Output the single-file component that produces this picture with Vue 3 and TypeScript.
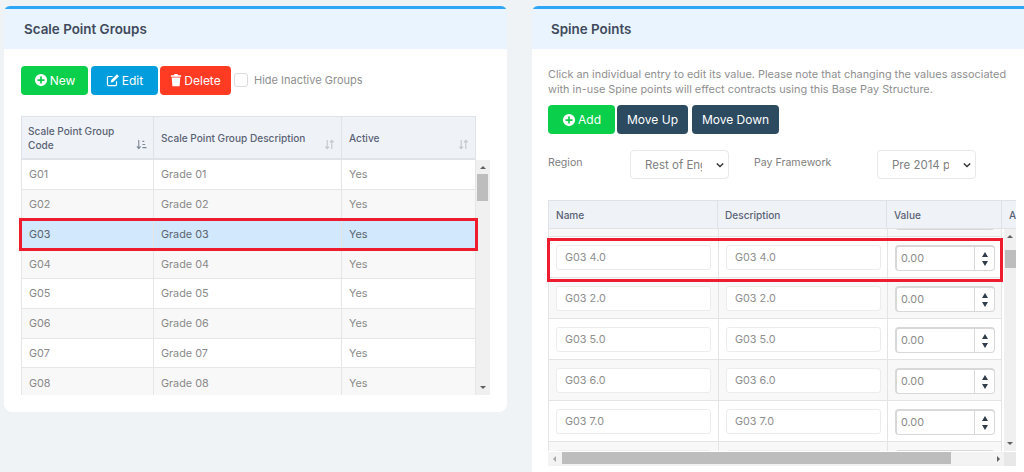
<script setup lang="ts">
const groups = ['01','02','03','04','05','06','07','08'].map(n => ({ code: 'G' + n, desc: 'Grade ' + n, active: 'Yes', picked: n === '03' }))
const spine = ['3.0','4.0','2.0','5.0','6.0','7.0','8.0']
</script>

<template>
  <div class="page">
    <section class="panel left">
      <h2 class="panel-head">Scale Point Groups</h2>
      <div class="left-body">
        <div class="toolbar">
          <button class="btn green w67">
            <svg class="ic" viewBox="0 0 16 16"><path fill="#fff" fill-rule="evenodd" d="M8 1a7 7 0 1 0 0 14A7 7 0 0 0 8 1zM7 4h2v3h3v2H9v3H7V9H4V7h3z"/></svg>New
          </button>
          <button class="btn blue w67">
            <svg class="ic" viewBox="0 0 16 16"><path fill="none" stroke="#fff" stroke-width="1.4" d="M12 9.5V13a1.3 1.3 0 0 1-1.3 1.3H3A1.3 1.3 0 0 1 1.7 13V5.3A1.3 1.3 0 0 1 3 4h4.5"/><path fill="#fff" d="M12.6 1.4l2.2 2.2-6.6 6.6-2.8.6.6-2.8z"/></svg>Edit
          </button>
          <button class="btn red w71">
            <svg class="ic trash" viewBox="0 0 14 16"><path fill="#fff" d="M1 2.4h12V4.2H1zM5 1h4v2H5zM2 5h10L11.2 15.4H2.8z"/></svg>Delete
          </button>
          <label class="check"><input type="checkbox" class="box" /><span>Hide Inactive Groups</span></label>
        </div>
        <div class="grid-wrap">
          <div class="g-head">
            <div class="th c1"><span>Scale Point Group<br />Code</span>
              <svg class="sort dark" viewBox="0 0 12 12"><path d="M3 1v9M1 8l2 2.4L5 8" fill="none" stroke="currentColor" stroke-width="1.2"/><path d="M7 2h2v1.2H7zM7 5.4h3v1.2H7zM7 8.8h4.5V10H7z" fill="currentColor"/></svg>
            </div>
            <div class="th c2"><span>Scale Point Group Description</span>
              <svg class="sort" viewBox="0 0 12 12"><path d="M3.5 1v9.5M1.5 8.4l2 2.2 2-2.2M8.5 11V1.5M6.5 3.6l2-2.2 2 2.2" fill="none" stroke="currentColor" stroke-width="1.2"/></svg>
            </div>
            <div class="th c3"><span>Active</span>
              <svg class="sort" viewBox="0 0 12 12"><path d="M3.5 1v9.5M1.5 8.4l2 2.2 2-2.2M8.5 11V1.5M6.5 3.6l2-2.2 2 2.2" fill="none" stroke="currentColor" stroke-width="1.2"/></svg>
            </div>
          </div>
          <div class="g-scroll">
            <div class="g-rows">
              <div v-for="(g, i) in groups" :key="g.code" class="g-row" :class="{ odd: i % 2 === 1, picked: g.picked }">
                <div class="td c1">{{ g.code }}</div>
                <div class="td c2">{{ g.desc }}</div>
                <div class="td c3">{{ g.active }}</div>
              </div>
            </div>
            <div class="vbar">
              <i class="tri up"></i><b class="thumb"></b><i class="tri down"></i>
            </div>
          </div>
          <div class="mark mark-left"></div>
        </div>
      </div>
    </section>

    <section class="panel right">
      <h2 class="panel-head">Spine Points</h2>
      <div class="right-body">
        <p class="note">Click an individual entry to edit its value. Please note that changing the values associated with in-use Spine points will effect contracts using this Base Pay Structure.</p>
        <div class="toolbar2">
          <button class="btn green w67">
            <svg class="ic" viewBox="0 0 16 16"><path fill="#fff" fill-rule="evenodd" d="M8 1a7 7 0 1 0 0 14A7 7 0 0 0 8 1zM7 4h2v3h3v2H9v3H7V9H4V7h3z"/></svg>Add
          </button>
          <button class="btn dark-btn w71">Move Up</button>
          <button class="btn dark-btn w87">Move Down</button>
        </div>
        <div class="filters">
          <span class="f-label l1">Region</span>
          <div class="sel-wrap">
            <select class="dropdown"><option>Rest of England</option></select>
            <svg class="chev" viewBox="0 0 10 6"><path d="M1 1l4 4 4-4" fill="none" stroke="#333" stroke-width="1.7"/></svg>
          </div>
          <span class="f-label l2">Pay Framework</span>
          <div class="sel-wrap">
            <select class="dropdown"><option>Pre 2014 pay</option></select>
            <svg class="chev" viewBox="0 0 10 6"><path d="M1 1l4 4 4-4" fill="none" stroke="#333" stroke-width="1.7"/></svg>
          </div>
        </div>
        <div class="sp-wrap">
          <div class="sp-head">
            <div class="sh s1">Name</div>
            <div class="sh s2">Description</div>
            <div class="sh s3">Value</div>
            <div class="sh s4">Action</div>
          </div>
          <div class="sp-main">
            <div class="sp-view">
              <div class="sp-rows">
                <div v-for="(p, i) in spine" :key="p" class="sp-row" :class="{ odd: i % 2 === 0 }">
                  <div class="sd d1"><input class="txt" :value="'G03 ' + p" /></div>
                  <div class="sd d2"><input class="txt" :value="'G03 ' + p" /></div>
                  <div class="sd d3">
                    <div class="num">
                      <input class="num-in" value="0.00" />
                      <span class="step"><i class="arrow a-up"></i><i class="arrow a-down"></i></span>
                    </div>
                  </div>
                </div>
              </div>
            </div>
            <div class="vbar2">
              <i class="tri up"></i><b class="thumb2"></b><i class="tri down"></i>
            </div>
          </div>
          <div class="hbar">
            <div class="h-track">
              <i class="tri-h h-left"></i><b class="h-thumb"></b><i class="tri-h h-right"></i>
            </div>
            <div class="corner"></div>
          </div>
          <div class="mark mark-right"></div>
        </div>
      </div>
    </section>
  </div>
</template>

<style>
html, body { margin: 0; background: #eff3f6; }
</style>

<style scoped>
* { box-sizing: border-box; }
.page {
  display: flex;
  gap: 25px;
  width: 1024px;
  height: 472px;
  padding: 6px 0 0 4px;
  overflow: hidden;
  background: #eff3f6;
  font-family: Inter, "Liberation Sans", sans-serif;
  color: #8a8a8a;
}
.panel {
  background: #fff;
  border-top: 3px solid #2ea6f5;
  border-radius: 6px 6px 0 0;
  display: flex;
  flex-direction: column;
}
.left { width: 503px; height: 406px; border-radius: 6px 6px 8px 8px; }
.right { width: 492px; height: 466px; border-top-right-radius: 0; }
.panel-head {
  margin: 0;
  height: 40px;
  background: #eaf4fe;
  color: #3f4a5c;
  font-size: 13.4px;
  font-weight: 600;
  line-height: 40px;
}
.left .panel-head { padding-left: 20px; }
.right .panel-head { padding-left: 19px; }
.left-body { padding: 17px 0 0 17px; }
.toolbar { display: flex; align-items: center; height: 28px; }
.btn {
  height: 29px;
  border: 0;
  border-radius: 4px;
  color: #fff;
  font: 400 12px Inter, "Liberation Sans", sans-serif;
  display: inline-flex;
  align-items: center;
  justify-content: center;
  gap: 2px;
  padding: 0;
}
.w67 { width: 67px; }
.w71 { width: 71px; }
.w87 { width: 87px; }
.green { background: #0acf4a; }
.blue { background: #019ddc; margin-left: 3px; }
.red { background: #ff3b24; margin-left: 2px; }
.dark-btn { background: #2c4a60; }
.ic { width: 14px; height: 14px; }
.trash { width: 12px; }
.check { display: flex; align-items: center; margin-left: 3px; font-size: 11px; color: #8f8f8f; }
.box {
  appearance: none;
  width: 14px;
  height: 14px;
  margin: 0 6px 0 0;
  background: #fff;
  border: 1px solid #dcdcdc;
  border-radius: 3px;
}
.grid-wrap { position: relative; margin-top: 22px; width: 470px; }
.g-head {
  display: flex;
  width: 455px;
  height: 44px;
  background: #eff3f8;
  border: 1px solid #dfe3e8;
  border-bottom-width: 2px;
}
.c1 { width: 132px; }
.c2 { width: 188px; }
.c3 { width: 133px; }
.th {
  position: relative;
  display: flex;
  align-items: center;
  padding-left: 7px;
  font-size: 10.1px;
  font-weight: 500;
  line-height: 14px;
  color: #5a6274;
  border-right: 1px solid #dfe3e8;
}
.th.c1 { padding-left: 6px; }
.th:last-child { border-right: 0; }
.sort {
  position: absolute;
  right: 6px;
  bottom: 8px;
  width: 11px;
  height: 11px;
  color: #c3c7cc;
}
.sort.dark { color: #7d8794; }
.g-scroll { display: flex; height: 235px; overflow: hidden; }
.g-rows { width: 455px; flex: none; }
.g-row {
  display: flex;
  height: 29.75px;
  border: 1px solid #e6e6e6;
  border-top: 0;
  background: #fff;
}
.g-row.odd { background: #f8f8f8; }
.g-row.picked { background: #d2e8fd; }
.td {
  display: flex;
  align-items: center;
  padding: 1px 0 0 7px;
  font-size: 10.8px;
  color: #8a8a8a;
  border-right: 1px solid #e6e6e6;
}
.td:last-child { border-right: 0; }
.picked .td { color: #5a6470; }
.vbar, .vbar2 {
  position: relative;
  width: 14px;
  background: #f0f0f0;
}
.tri {
  position: absolute;
  left: 4px;
  width: 0;
  height: 0;
  border-left: 3px solid transparent;
  border-right: 3px solid transparent;
}
.tri.up { top: 6px; border-bottom: 3px solid #5f5f5f; }
.tri.down { bottom: 6px; border-top: 3px solid #5f5f5f; }
.thumb { display: block; width: 11px; height: 27px; margin: 14px 0 0 1px; background: #bdbdbd; }
.mark { position: absolute; border: 3px solid #ed1c2e; pointer-events: none; }
.mark-left { left: -2px; top: 102px; width: 459px; height: 33px; }

.right-body { padding: 18px 0 0 16px; }
.note { margin: 0; width: 470px; font-size: 10.9px; line-height: 15px; color: #8f8f8f; }
.toolbar2 { display: flex; gap: 2px; margin-top: 8px; }
.toolbar2 .w87 { margin-left: 2px; }
.filters { display: flex; align-items: flex-start; margin-top: 16px; height: 29px; }
.f-label { font-size: 10.6px; line-height: 14px; margin-top: 6px; color: #808080; }
.l1 { width: 82px; }
.l2 { width: 123px; margin-left: 25px; }
.sel-wrap { position: relative; width: 99px; height: 29px; }
.dropdown {
  appearance: none;
  width: 100%;
  height: 100%;
  padding: 0 26px 0 14px;
  background: #fff;
  border: 1px solid #e8e8e8;
  border-radius: 4px;
  color: #808080;
  font: 400 11.5px Inter, "Liberation Sans", sans-serif;
}
.chev { position: absolute; right: 5px; top: 12px; width: 8px; height: 6px; pointer-events: none; }
.sp-wrap { position: relative; margin-top: 21px; width: 468px; }
.sp-head {
  display: flex;
  height: 29px;
  background: #eff3f8;
  border-top: 1px solid #dfe3e8;
  border-bottom: 1px solid #dfe3e8;
  overflow: hidden;
}
.s1 { width: 170px; flex: none; }
.s2 { width: 169px; flex: none; }
.s3 { width: 115px; flex: none; }
.s4 { width: 60px; flex: none; }
.sh {
  padding-left: 7px;
  border-right: 1px solid #dfe3e8;
  font-size: 10.1px;
  font-weight: 500;
  line-height: 29px;
  color: #5a6274;
}
.sh:first-child { border-left: 1px solid #dfe3e8; }
.sp-main { display: flex; height: 222px; }
.sp-view { width: 456px; overflow: hidden; }
.sp-rows { margin-top: -33px; width: 454px; }
.sp-row {
  display: flex;
  height: 41px;
  border-bottom: 1px solid #e4e4e4;
  border-left: 1px solid #e4e4e4;
  background: #fff;
}
.sp-row.odd { background: #f8f8f8; }
.sd {
  flex: none;
  padding: 8px 0 0 7px;
  border-right: 1px solid #e4e4e4;
}
.d1 { width: 170px; }
.d2 { width: 169px; }
.d3 { width: 114px; }
.txt {
  display: block;
  width: 155px;
  height: 25px;
  padding: 0 8px;
  background: #fff;
  border: 1px solid #ececec;
  border-radius: 3px;
  color: #8f8f8f;
  font: 400 10.8px Inter, "Liberation Sans", sans-serif;
}
.num {
  display: flex;
  width: 100px;
  height: 26px;
  background: #fff;
  border: 1px solid #d8d8d8;
  border-top-width: 2px;
  border-left-width: 2px;
  border-radius: 4px;
}
.num-in {
  width: 77px;
  min-width: 0;
  padding: 0 0 0 4px;
  border: 0;
  background: transparent;
  color: #8a8a8a;
  font: 400 10.8px Inter, "Liberation Sans", sans-serif;
}
.step {
  display: flex;
  flex: 1;
  flex-direction: column;
  align-items: center;
  justify-content: center;
  gap: 4px;
  border-left: 1px solid #d8d8d8;
}
.arrow { width: 0; height: 0; border-left: 3.5px solid transparent; border-right: 3.5px solid transparent; }
.a-up { border-bottom: 5px solid #2f3c4a; }
.a-down { border-top: 5px solid #2f3c4a; }
.vbar2 { width: 12px; flex: none; }
.vbar2 .tri { left: 3px; }
.thumb2 { display: block; width: 11px; height: 18px; margin: 21px 0 0 1px; background: #bdbdbd; }
.hbar { display: flex; height: 14px; margin-top: 1px; }
.h-track { position: relative; width: 456px; background: #f3f3f3; }
.h-thumb { position: absolute; left: 14px; top: 0; width: 389px; height: 12px; background: #bdbdbd; }
.tri-h { position: absolute; top: 4px; width: 0; height: 0; border-top: 3px solid transparent; border-bottom: 3px solid transparent; }
.h-left { left: 5px; border-right: 3px solid #a8a8a8; }
.h-right { right: 4px; border-left: 3px solid #5f5f5f; }
.corner { width: 12px; background: #e8e8e8; }
.mark-right { left: -1px; top: 38px; width: 456px; height: 44px; }
</style>
